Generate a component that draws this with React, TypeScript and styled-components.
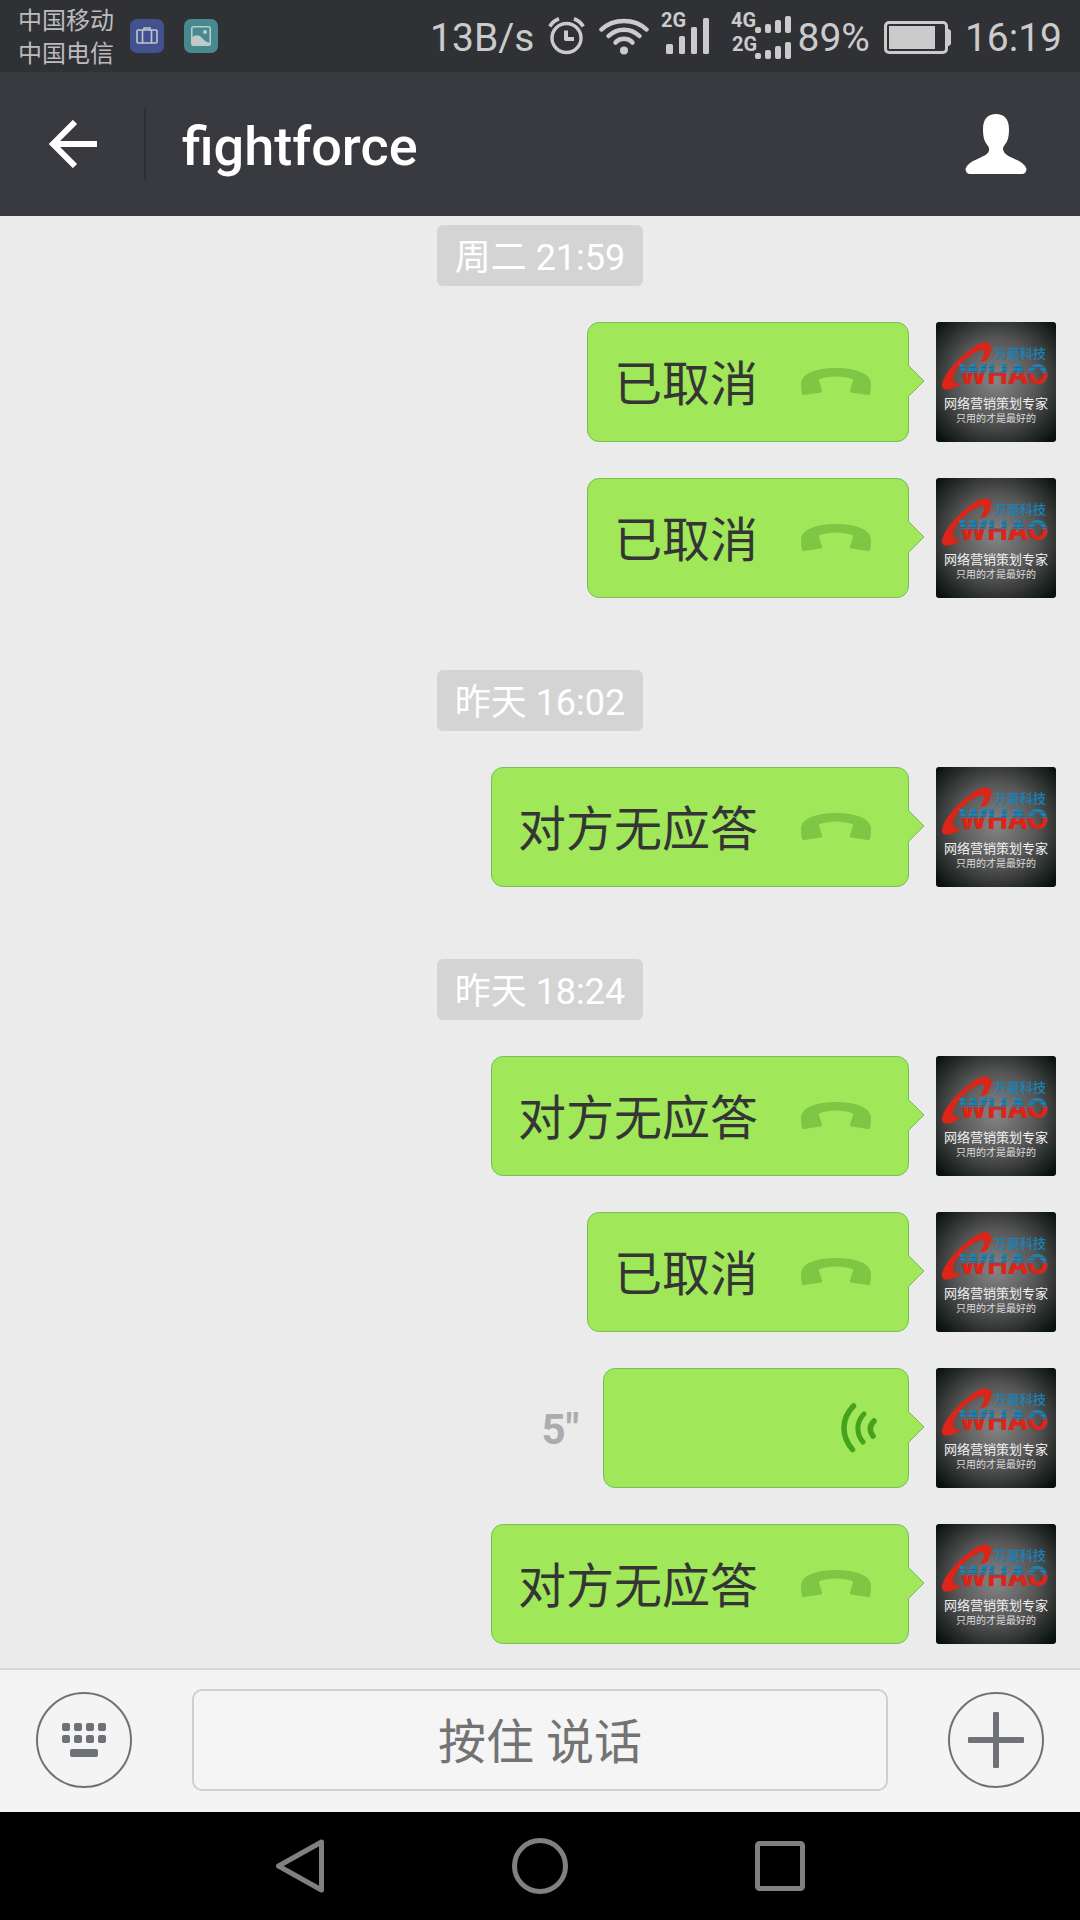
import React from 'react';
import styled, { createGlobalStyle } from 'styled-components';

const GlobalStyle = createGlobalStyle`
  *, *::before, *::after { box-sizing: border-box; }
  html, body { margin: 0; padding: 0; }
  body {
    background: #ebebeb;
    font-family: Roboto, "Noto Sans CJK SC", sans-serif;
  }
  button { font-family: inherit; margin: 0; padding: 0; border: 0; background: none; cursor: pointer; }
  svg { display: block; flex: none; }
`;

const Screen = styled.div`
  display: flex;
  flex-direction: column;
  min-height: 100vh;
`;

/* ---------- status bar ---------- */

const StatusBar = styled.div`
  display: flex;
  align-items: center;
  justify-content: space-between;
  height: 72px;
  padding: 0 18px;
  background: #303135;
  color: #cbcbcb;
`;

const StatusGroup = styled.div<{ $gap: number }>`
  display: flex;
  align-items: center;
  gap: ${(p) => p.$gap}px;
`;

const Carriers = styled.div`
  padding-top: 4px;
  font-size: 24px;
  line-height: 33px;
  color: #bcbcbe;
`;

const StatusText = styled.span`
  padding-top: 4px;
  font-size: 39px;
  line-height: 48px;
  white-space: nowrap;
`;

const NoticeBadge = styled.span<{ $color: string }>`
  display: flex;
  align-items: center;
  justify-content: center;
  width: 34px;
  height: 34px;
  border-radius: 7px;
  background: ${(p) => p.$color};
`;

const SignalLabel = styled.text`
  font-size: 20px;
  font-weight: 700;
  fill: #cbcbcb;
`;

/* ---------- header ---------- */

const Header = styled.header`
  display: flex;
  align-items: center;
  height: 144px;
  background: #393a3f;
  color: #fff;
`;

const HeaderButton = styled.button<{ $width: number }>`
  display: flex;
  align-items: center;
  justify-content: center;
  width: ${(p) => p.$width}px;
  height: 100%;
`;

const Divider = styled.span`
  width: 2px;
  height: 72px;
  background: #2e2f33;
`;

const Title = styled.h1`
  flex: 1;
  margin: 0;
  padding: 6px 0 0 36px;
  font-size: 54px;
  line-height: 72px;
  font-weight: 500;
`;

/* ---------- messages ---------- */

const Chat = styled.main`
  flex: 1;
  display: flex;
  flex-direction: column;
  gap: 72px;
  padding: 9px 24px 24px;
`;

const Group = styled.section`
  display: flex;
  flex-direction: column;
  gap: 36px;
`;

const Time = styled.time`
  align-self: center;
  padding: 9px 18px 4px;
  border-radius: 6px;
  background: #d4d4d4;
  color: #fff;
  font-size: 36px;
  line-height: 48px;
`;

const Row = styled.div`
  display: flex;
  align-items: center;
  justify-content: flex-end;
`;

const Bubble = styled.button<{ $voice?: boolean }>`
  position: relative;
  display: flex;
  align-items: center;
  justify-content: ${(p) => (p.$voice ? 'flex-end' : 'flex-start')};
  gap: 43px;
  height: 120px;
  width: ${(p) => (p.$voice ? '306px' : 'auto')};
  margin-right: 27px;
  padding: 0 ${(p) => (p.$voice ? 31 : 37)}px 0 26px;
  border: 1px solid #76bf55;
  border-radius: 12px;
  background: #a0e75a;
  color: #353535;
`;

const BubbleText = styled.span`
  padding-top: 6px;
  font-size: 48px;
  line-height: 72px;
`;

const Tail = styled.svg`
  position: absolute;
  left: 100%;
  top: 42px;
`;

const Duration = styled.span`
  margin-right: 24px;
  padding-top: 4px;
  color: #acacac;
  font-size: 42px;
  line-height: 48px;
  font-weight: 700;
`;

const AvatarButton = styled.button`
  width: 120px;
  height: 120px;
  border-radius: 3px;
  overflow: hidden;
`;

const LogoText = styled.text<{ $size: number; $weight?: number }>`
  font-size: ${(p) => p.$size}px;
  font-weight: ${(p) => p.$weight ?? 400};
`;

const LogoName = styled(LogoText)`
  font-family: Inter, sans-serif;
`;

/* ---------- composer ---------- */

const Composer = styled.footer`
  display: flex;
  align-items: center;
  justify-content: space-between;
  gap: 60px;
  height: 144px;
  padding: 0 36px 2px;
  border-top: 2px solid #d7d7d7;
  background: #f4f4f4;
`;

const RoundButton = styled.button`
  display: flex;
  align-items: center;
  justify-content: center;
  flex: none;
  width: 96px;
  height: 96px;
  border: 2px solid #6e7277;
  border-radius: 50%;
`;

const TalkButton = styled.button`
  flex: 1;
  height: 102px;
  padding-top: 6px;
  border: 2px solid #d0d0d0;
  border-radius: 10px;
  background: #f5f5f5;
  color: #737373;
  font-size: 48px;
  line-height: 72px;
`;

/* ---------- navigation bar ---------- */

const NavBar = styled.nav`
  display: flex;
  align-items: center;
  justify-content: center;
  gap: 120px;
  height: 108px;
  background: #000;
`;

const NavButton = styled.button`
  display: flex;
  align-items: center;
  justify-content: center;
  width: 120px;
  height: 100%;
`;

/* ---------- drawings ---------- */

const SuitcaseIcon = () => (
  <svg width="22" height="18" viewBox="0 0 22 18" fill="none" stroke="#c2c5d0" strokeWidth="1.6">
    <rect x="1" y="3" width="20" height="13" rx="1" />
    <path d="M6.5 3v13M15.500 3v13M8 3V1h6v2" />
  </svg>
);

const PictureIcon = () => (
  <svg width="20" height="20" viewBox="0 0 20 20">
    <rect x="0.800" y="0.800" width="18.400" height="18.400" rx="1.500" fill="none" stroke="#c0c9ca" strokeWidth="1.600" />
    <circle cx="14" cy="6" r="2" fill="#c0c9ca" />
    <path d="M1 11.500C4 8.500 8 8.500 10.500 11.500 13 14.500 16 16.500 19 17v2H1z" fill="#c0c9ca" />
  </svg>
);

const AlarmIcon = () => (
  <svg width="37" height="38" viewBox="0 0 37 38" fill="none" stroke="#cbcbcb">
    <circle cx="18.500" cy="21" r="14.500" strokeWidth="3.400" />
    <path d="M18 13.500V22h8" strokeWidth="4" strokeLinejoin="round" />
    <path d="M1.800 9.500Q5 4 11 1.800M35.200 9.500Q32 4 26 1.800" strokeWidth="3.600" />
  </svg>
);

const WifiIcon = () => (
  <svg width="50" height="38" viewBox="0 0 50 38" fill="none" stroke="#cbcbcb" strokeWidth="4.500" strokeLinecap="round">
    <path d="M2.500 12.500C14 1 36 1 47.500 12.500" />
    <path d="M9.500 19C18 10.500 32 10.500 40.500 19" />
    <path d="M16.500 25.500C21 20.500 29 20.500 33.500 25.500" />
    <circle cx="25" cy="33.500" r="4" fill="#cbcbcb" stroke="none" />
  </svg>
);

const SignalIcon = () => (
  <svg width="56" height="56" viewBox="0 -4 56 56" fill="#cbcbcb">
    <SignalLabel x="0" y="15">2G</SignalLabel>
    <rect x="5" y="32" width="7" height="10" rx="1.500" />
    <rect x="18" y="24" width="6" height="18" rx="1.500" />
    <rect x="30" y="15" width="6" height="27" rx="1.500" />
    <rect x="42" y="6" width="6" height="36" rx="1.500" />
  </svg>
);

const DualSignalIcon = () => (
  <svg width="60" height="56" viewBox="0 -4 60 56" fill="#cbcbcb">
    <SignalLabel x="0" y="15">4G</SignalLabel>
    <SignalLabel x="1" y="39">2G</SignalLabel>
    {[21, 47].map((bottom) => (
      <g key={bottom}>
        <rect x="24" y={bottom - 6} width="6" height="6" rx="2" />
        <rect x="34" y={bottom - 9} width="6" height="9" rx="2" />
        <rect x="44" y={bottom - 13} width="6" height="13" rx="2" />
        <rect x="54" y={bottom - 17} width="6" height="17" rx="2" />
      </g>
    ))}
  </svg>
);

const BatteryIcon = () => (
  <svg width="67" height="36" viewBox="0 -3 67 36" fill="#cbcbcb">
    <rect x="1.500" y="1.500" width="61" height="30" rx="3.500" fill="none" stroke="#cbcbcb" strokeWidth="3" />
    <rect x="5" y="5" width="46" height="23" />
    <path d="M63 8h2l2 2v13l-2 2h-2z" />
  </svg>
);

const BackIcon = () => (
  <svg width="50" height="48" viewBox="0 0 50 48" fill="none" stroke="#fff" strokeWidth="6">
    <path d="M28 2 6 24l22 22M6 24h44" />
  </svg>
);

const PersonIcon = () => (
  <svg width="62" height="60" viewBox="0 0 62 60" fill="#fff">
    <path d="M31 0C39 0 44 5 44 15C44 25 42 28 39 32Q37 34.500 39 38C42 43 50 44 57 49Q61 52 61.500 55Q61 60 57 60H5Q1 60 .500 55Q1 52 5 49C12 44 20 43 23.500 38Q25 34.500 23 32C20 28 18 25 18 15C18 5 23 0 31 0Z" />
  </svg>
);

const PhoneIcon = () => (
  <svg width="70" height="28" viewBox="0 0 70 28" fill="#7ec745">
    <path d="M0 16C0 5 16 0 35 0S70 5 70 16Q70 22 69 26Q68.500 27.500 67 27L50 24.500Q48.500 24 49 22.500L52 13Q52.500 11.500 51 11C42 7.500 28 7.500 19 11Q17.500 11.500 18 13L21 22.500Q21.500 24 20 24.500L3 27Q1.500 27.500 1 26Q0 22 0 16Z" />
  </svg>
);

const VoiceIcon = () => (
  <svg width="36" height="50" viewBox="0 0 36 50" fill="none" stroke="#46a11c" strokeLinecap="round">
    <path d="M12.500 3C.500 15 -.500 33 11.500 46.500" strokeWidth="5.500" />
    <path d="M23 11C15 19 15 31 22 39" strokeWidth="5" />
    <path d="M33 18Q26 25 32 33" strokeWidth="5.500" />
  </svg>
);

const BubbleTail = () => (
  <Tail width="17" height="32" viewBox="0 0 17 32">
    <path d="M0 0 16 16 0 32z" fill="#a0e75a" />
    <path d="M0 0 16 16 0 32" fill="none" stroke="#76bf55" />
  </Tail>
);

const AvatarPicture = () => (
  <svg width="120" height="120" viewBox="0 0 120 120">
    <defs>
      <radialGradient id="glow" cx="50%" cy="48%" r="68%">
        <stop offset="0" stopColor="#858585" />
        <stop offset="0.500" stopColor="#565656" />
        <stop offset="1" stopColor="#07100c" />
      </radialGradient>
      <linearGradient id="stripes" gradientUnits="userSpaceOnUse" x1="0" y1="40" x2="0" y2="60">
        <stop offset="0.250" stopColor="#1583b9" />
        <stop offset="0.250" stopColor="#54565a" />
        <stop offset="0.300" stopColor="#54565a" />
        <stop offset="0.300" stopColor="#1583b9" />
        <stop offset="0.450" stopColor="#1583b9" />
        <stop offset="0.450" stopColor="#54565a" />
        <stop offset="0.500" stopColor="#54565a" />
        <stop offset="0.500" stopColor="#1583b9" />
        <stop offset="0.550" stopColor="#1583b9" />
        <stop offset="0.550" stopColor="#dc2418" />
      </linearGradient>
    </defs>
    <rect width="120" height="120" fill="url(#glow)" />
    <path d="M55 24C54 19 45 19 35 27C20 38 8 52 6 62C5 69 12 69 20 65L27 61C18 63 15 59 19 50C24 40 37 30 45 28C50 27 49 33 44 40L50 39C54 33 56 28 55 24Z" fill="#dc2418" />
    <LogoText $size={13} $weight={500} x="58" y="36" fill="#1583b9">万豪科技</LogoText>
    <LogoName $size={27} $weight={800} x="23" y="62" fill="url(#stripes)">WHAO</LogoName>
    <LogoText $size={13} x="8" y="86" fill="#f0f0f0">网络营销策划专家</LogoText>
    <LogoText $size={10} x="20" y="100" fill="#dcdcdc">只用的才是最好的</LogoText>
  </svg>
);

/* ---------- content ---------- */

type Message = { kind: 'call'; text: string } | { kind: 'voice'; seconds: number };

const cancelled: Message = { kind: 'call', text: '已取消' };
const unanswered: Message = { kind: 'call', text: '对方无应答' };

const groups: { time: string; messages: Message[] }[] = [
  { time: '周二 21:59', messages: [cancelled, cancelled] },
  { time: '昨天 16:02', messages: [unanswered] },
  { time: '昨天 18:24', messages: [unanswered, cancelled, { kind: 'voice', seconds: 5 }, unanswered] },
];

const MessageRow = ({ message }: { message: Message }) => (
  <Row>
    {message.kind === 'voice' ? (
      <>
        <Duration>{message.seconds}"</Duration>
        <Bubble $voice aria-label="语音">
          <VoiceIcon />
          <BubbleTail />
        </Bubble>
      </>
    ) : (
      <Bubble>
        <BubbleText>{message.text}</BubbleText>
        <PhoneIcon />
        <BubbleTail />
      </Bubble>
    )}
    <AvatarButton aria-label="头像">
      <AvatarPicture />
    </AvatarButton>
  </Row>
);

export default function App() {
  return (
    <Screen>
      <GlobalStyle />
      <StatusBar>
        <StatusGroup $gap={20}>
          <StatusGroup $gap={16}>
            <Carriers>
              <div>中国移动</div>
              <div>中国电信</div>
            </Carriers>
            <NoticeBadge $color="#42528f"><SuitcaseIcon /></NoticeBadge>
          </StatusGroup>
          <NoticeBadge $color="#468a90"><PictureIcon /></NoticeBadge>
        </StatusGroup>
        <StatusGroup $gap={14}>
          <StatusText>13B/s</StatusText>
          <AlarmIcon />
          <StatusGroup $gap={12}>
            <WifiIcon />
            <SignalIcon />
          </StatusGroup>
          <StatusGroup $gap={6}>
            <DualSignalIcon />
            <StatusText>89%</StatusText>
          </StatusGroup>
          <BatteryIcon />
          <StatusText>16:19</StatusText>
        </StatusGroup>
      </StatusBar>
      <Header>
        <HeaderButton $width={144} aria-label="返回"><BackIcon /></HeaderButton>
        <Divider />
        <Title>fightforce</Title>
        <HeaderButton $width={168} aria-label="聊天信息"><PersonIcon /></HeaderButton>
      </Header>
      <Chat>
        {groups.map((group) => (
          <Group key={group.time}>
            <Time>{group.time}</Time>
            {group.messages.map((message, i) => (
              <MessageRow key={i} message={message} />
            ))}
          </Group>
        ))}
      </Chat>
      <Composer>
        <RoundButton aria-label="键盘">
          <svg width="44" height="34" viewBox="0 0 44 34" fill="#6e7277">
            {[0, 12, 24, 36].map((x) => (
              <React.Fragment key={x}>
                <rect x={x} y="0" width="8" height="8" rx="2" />
                <rect x={x} y="12" width="8" height="8" rx="2" />
              </React.Fragment>
            ))}
            <rect x="8" y="26" width="28" height="8" rx="2" />
          </svg>
        </RoundButton>
        <TalkButton>按住 说话</TalkButton>
        <RoundButton aria-label="更多">
          <svg width="56" height="56" viewBox="0 0 56 56" fill="#6e7277">
            <rect x="25" y="0" width="6" height="56" rx="1" />
            <rect x="0" y="25" width="56" height="6" rx="1" />
          </svg>
        </RoundButton>
      </Composer>
      <NavBar>
        <NavButton aria-label="后退">
          <svg width="48" height="54" viewBox="0 0 48 54" fill="none" stroke="#808080" strokeWidth="5" strokeLinejoin="round">
            <path d="M45.500 3v48L2.500 27z" />
          </svg>
        </NavButton>
        <NavButton aria-label="主屏幕">
          <svg width="56" height="56" viewBox="0 0 56 56" fill="none" stroke="#808080" strokeWidth="5">
            <circle cx="28" cy="28" r="25.500" />
          </svg>
        </NavButton>
        <NavButton aria-label="最近任务">
          <svg width="50" height="50" viewBox="0 0 50 50" fill="none" stroke="#808080" strokeWidth="5">
            <rect x="2.500" y="2.500" width="45" height="45" rx="2" />
          </svg>
        </NavButton>
      </NavBar>
    </Screen>
  );
}
